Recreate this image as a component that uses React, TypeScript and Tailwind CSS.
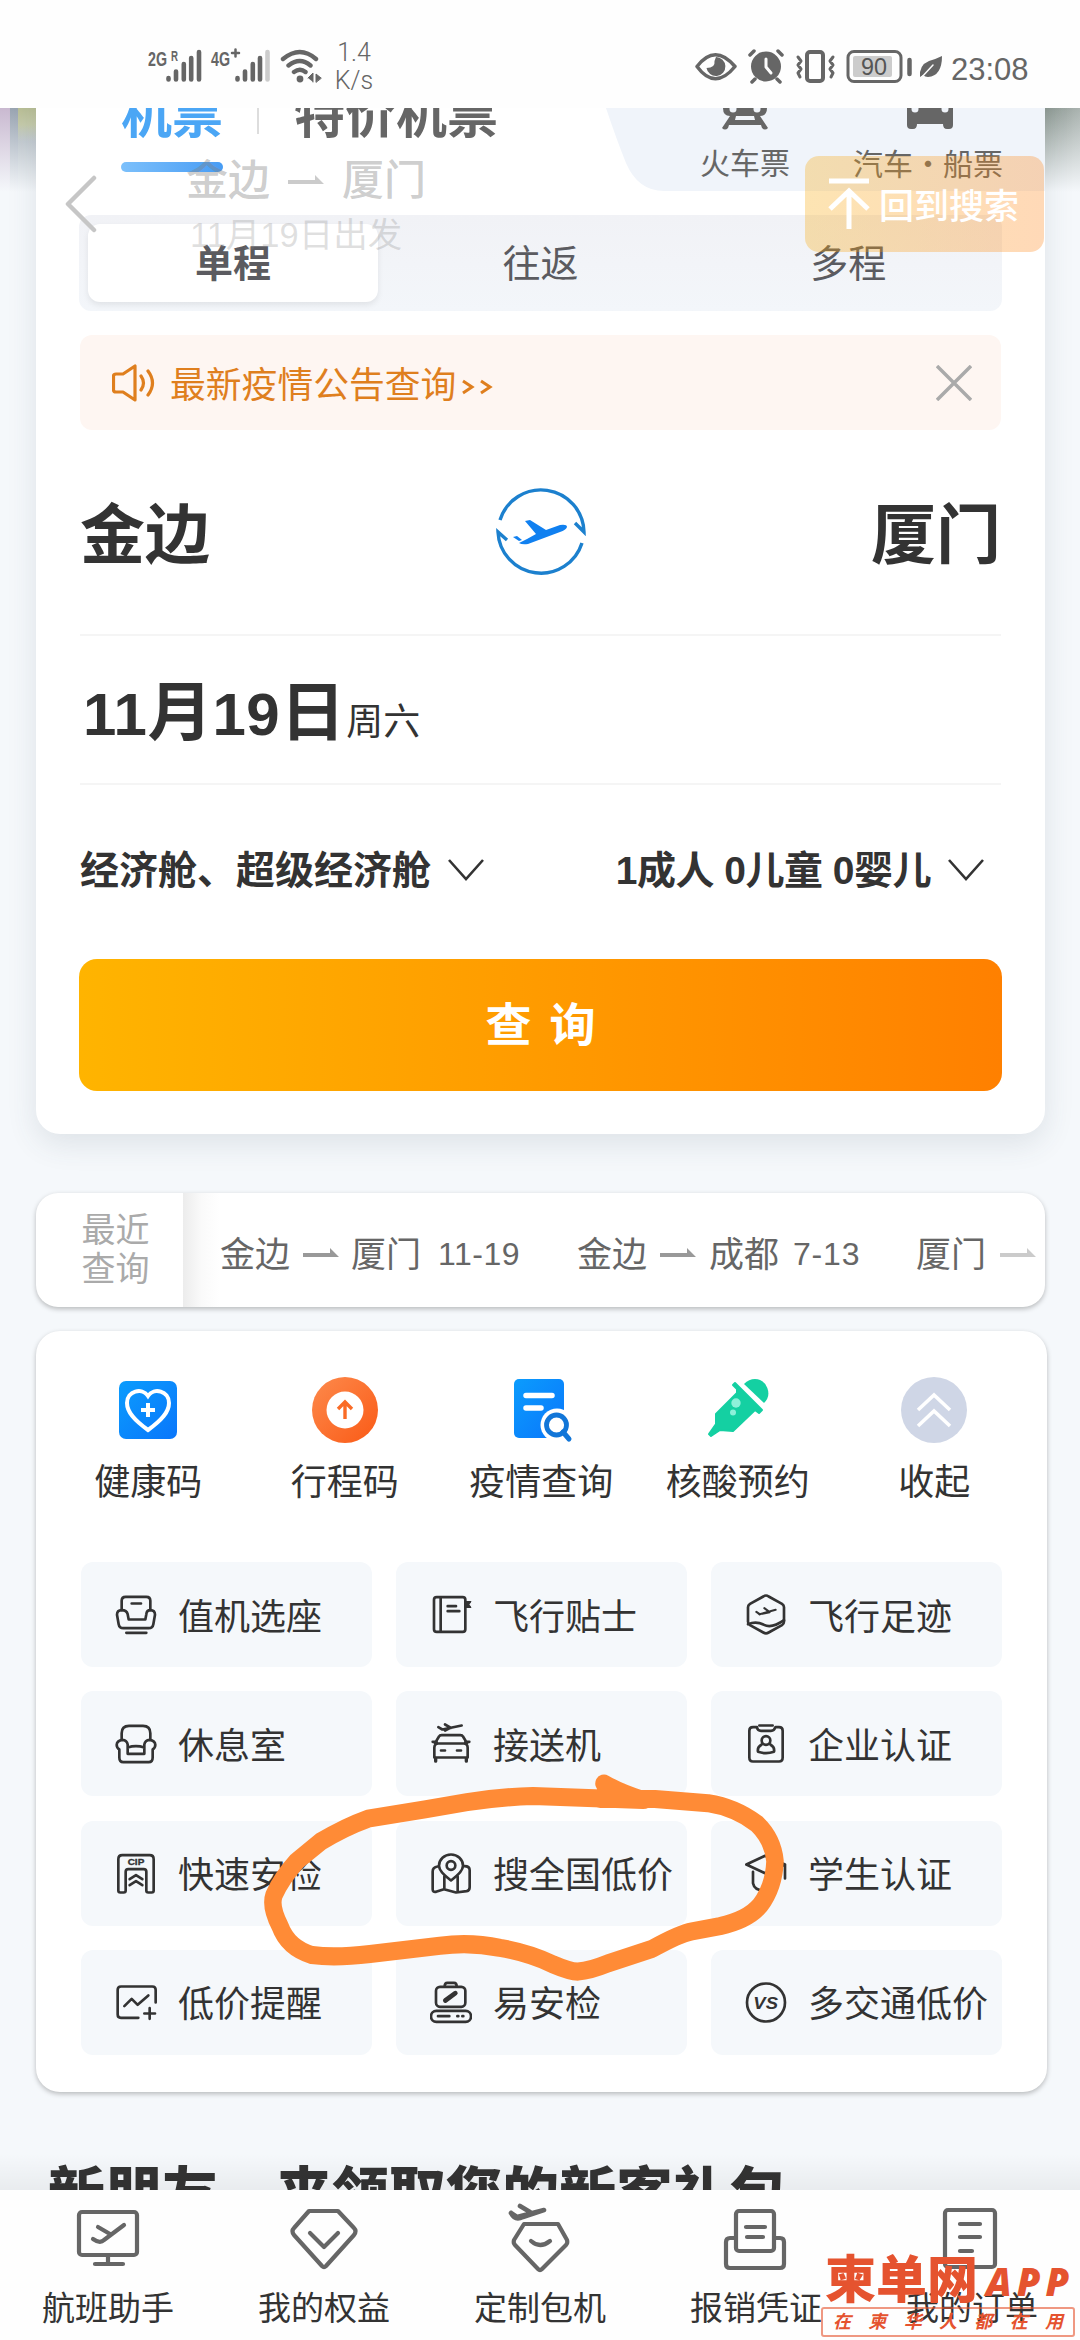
import type { ReactNode } from "react";

interface IconProps {
  children: ReactNode;
  box?: string;
  className?: string;
}

function LineIcon({ children, box = "0 0 126 126", className = "w-[42px] h-[43px]" }: IconProps) {
  return (
    <svg
      viewBox={box}
      className={`shrink-0 ${className}`}
      fill="none"
      stroke="currentColor"
      strokeWidth={8}
      strokeLinecap="round"
      strokeLinejoin="round"
    >
      {children}
    </svg>
  );
}

const servicos = [
  {
    nome: "值机选座",
    icon: (
      <LineIcon>
        <path d="M20 50V22q0-12 12-12h62q12 0 12 12v28M50 30h28M34 118h60" />
        <path d="M20 50q-14 0-14 14l5 28q2 12 14 12h76q12 0 14-12l5-28q0-14-14-14q-11 0-12 12l-3 16H41l-3-16q-3-12-18-12z" />
      </LineIcon>
    ),
  },
  {
    nome: "飞行贴士",
    icon: (
      <LineIcon box="-3 0 126 126">
        <rect x="9" y="11" width="94" height="104" rx="8" />
        <path d="M29 12v102M50 38h25M50 53h35" />
        <path d="M104 24h16l-6 9 6 9h-16z" fill="currentColor" strokeWidth={3} />
      </LineIcon>
    ),
  },
  {
    nome: "飞行足迹",
    icon: (
      <LineIcon>
        <path d="M63 6q4 0 8 3l40 22q6 4 6 10v44q0 6-6 10l-40 22q-8 5-16 0L15 95q-6-4-6-10V41q0-6 6-10L55 9q4-3 8-3z" />
        <path d="M9 92q25-10 48 2t60-14" />
        <path d="M34 55l10 7 48-13M58 44l16 12-22 5M36 56l8 7" strokeWidth={6} />
      </LineIcon>
    ),
  },
  {
    nome: "休息室",
    icon: (
      <LineIcon>
        <path d="M20 50V32q0-22 22-22h42q22 0 22 22v18" />
        <path d="M38 94V66q-2-13-16-14-16 2-17 15 0 9 8 14v24q0 14 12 14h76q12 0 12-14V81q8-5 8-14-1-13-17-15-14 1-16 14v28H38zM38 75q25-8 50 0" />
      </LineIcon>
    ),
  },
  {
    nome: "接送机",
    icon: (
      <LineIcon box="-3 0 126 126">
        <path d="M12 62L24 42q2-4 8-4h56q6 0 8 4l12 20M10 105V76q0-13 12-13h76q12 0 12 13v29zM5 58h12M103 58h12" />
        <path d="M14 108v8M106 108v8" strokeWidth={10} />
        <path d="M30 84h12M78 84h12" />
        <path d="M22 14l12 7 58-12M42 6l18 10M58 16l-16 8" />
      </LineIcon>
    ),
  },
  {
    nome: "企业认证",
    icon: (
      <LineIcon>
        <path d="M36 14H24q-11 0-11 11v80q0 12 11 12h78q11 0 11-12V25q0-11-11-11H92" />
        <path d="M43 9h40M36 16q2 9 12 9h30q10 0 12-9" />
        <circle cx="63" cy="54" r="13" />
        <path d="M50 66q-14 8-11 22q24 8 48 0q3-14-11-22" />
      </LineIcon>
    ),
  },
  {
    nome: "快速安检",
    icon: (
      <LineIcon>
        <path d="M10 20q0-12 12-12h82q12 0 12 12v94q0 6-6 6h-10q-6 0-6-6V58q0-8-8-8H40q-8 0-8 8v56q0 6-6 6H16q-6 0-6-6z" />
        <path d="M44 80l19-12 19 12M44 98l19-12 19 12" />
        <text x="38" y="38" fontSize="28" fontWeight="700" fill="currentColor" strokeWidth="1" textLength="50" lengthAdjust="spacingAndGlyphs">CIP</text>
      </LineIcon>
    ),
  },
  {
    nome: "搜全国低价",
    icon: (
      <LineIcon box="-3 0 126 126">
        <path d="M60 84Q24 58 24 40a36 34 0 0 1 72 0Q96 58 60 84z" />
        <circle cx="60" cy="39" r="13" />
        <path d="M20 42q-15 2-15 15v53q0 10 10 8l24-8 36 10 32-4q9-2 9-12V53q0-12-16-12M40 72v38M80 72v46" />
      </LineIcon>
    ),
  },
  {
    nome: "学生认证",
    icon: (
      <LineIcon>
        <path d="M4 36L60 10l60 26-60 26zM24 58v34q4 22 36 22t36-22V58M120 36v42" />
      </LineIcon>
    ),
  },
  {
    nome: "低价提醒",
    icon: (
      <LineIcon>
        <path d="M70 109H18q-10 0-10-10V25q0-10 10-10h94q10 0 10 10v38M28 74l22-22 18 18 32-28M104 80v32M88 96h32" />
      </LineIcon>
    ),
  },
  {
    nome: "易安检",
    icon: (
      <LineIcon>
        <rect x="18" y="16" width="88" height="60" rx="12" />
        <path d="M44 15q0-11 8-11h20q8 0 8 11" />
        <rect x="3" y="88" width="120" height="33" rx="16" />
        <path d="M24 104h34M82 104h3M97 104h3" />
        <path d="M46 57l30-22" strokeWidth={14} />
      </LineIcon>
    ),
  },
  {
    nome: "多交通低价",
    icon: (
      <LineIcon>
        <circle cx="63" cy="63" r="57" />
        <text x="25" y="81" fontSize="50" fontWeight="700" fontStyle="italic" fill="currentColor" stroke="none" textLength="74" lengthAdjust="spacingAndGlyphs">VS</text>
      </LineIcon>
    ),
  },
];

const atalhos = [
  {
    nome: "健康码",
    icon: (
      <svg viewBox="0 0 68 68" className="w-[68px] h-[68px]" fill="none">
        <rect x="5" y="5" width="58" height="58" rx="7" fill="url(#azul)" />
        <path d="M34 54C20 44 13 36 13 27c0-12 15-16 21-7 6-9 21-5 21 7 0 9-7 17-21 27z" stroke="#fff" strokeWidth="4" />
        <path d="M34 27v14M27 34h14" stroke="#fff" strokeWidth="4" />
      </svg>
    ),
  },
  {
    nome: "行程码",
    icon: (
      <svg viewBox="0 0 68 68" className="w-[68px] h-[68px]" fill="none">
        <circle cx="34" cy="34" r="33" fill="url(#laranja)" />
        <circle cx="34" cy="34" r="18.5" fill="#fff" />
        <path d="M34 43V26M27 33l7-7 7 7" stroke="#fa6b26" strokeWidth="3.4" />
      </svg>
    ),
  },
  {
    nome: "疫情查询",
    icon: (
      <svg viewBox="0 0 68 68" className="w-[68px] h-[68px]" fill="none">
        <rect x="7" y="3" width="50" height="59" rx="5" fill="url(#azul)" />
        <path d="M19 19.500h26M19 32h15" stroke="#fff" strokeWidth="5.500" strokeLinecap="round" />
        <circle cx="50" cy="49" r="16.500" fill="#fff" />
        <circle cx="49.500" cy="49" r="10" stroke="#1276d8" strokeWidth="4.800" />
        <path d="M56 56l6 7" stroke="#1276d8" strokeWidth="5" strokeLinecap="round" />
      </svg>
    ),
  },
  {
    nome: "核酸预约",
    icon: (
      <svg viewBox="0 0 68 68" className="w-[68px] h-[68px]" fill="#14d0a2" strokeLinejoin="round">
        <path d="M40 8q5-5 11-5a14 14 0 0 1 9 24z" />
        <path d="M31 7l27 27-3 3-4-3-22 21-13-1-9 6-2-2 7-10V38l21-21V13l-4-4z" stroke="#14d0a2" strokeWidth="2" />
        <circle cx="32" cy="27" r="4.700" fill="#8df0d9" />
        <circle cx="29" cy="36.500" r="3" fill="#8df0d9" />
      </svg>
    ),
  },
  {
    nome: "收起",
    icon: (
      <svg viewBox="0 0 68 68" className="w-[68px] h-[68px]" fill="none">
        <circle cx="34" cy="34" r="33" fill="#cfd6e6" />
        <path d="M18 34l16-15 16 15M18 50l16-15 16 15" stroke="#fff" strokeWidth="3.6" />
      </svg>
    ),
  },
];

const abas = [
  {
    nome: "航班助手",
    icon: (
      <svg viewBox="0 0 72 72" className="w-[72px] h-[72px]" fill="none" stroke="#666" strokeWidth="4.2" strokeLinecap="round" strokeLinejoin="round">
        <rect x="7" y="9" width="58" height="43" rx="3" />
        <path d="M36 53v8M23 61h28M26 24l12 7M52 22L32 37q-4 4-11-1" />
      </svg>
    ),
  },
  {
    nome: "我的权益",
    icon: (
      <svg viewBox="0 0 72 72" className="w-[72px] h-[72px]" fill="none" stroke="#666" strokeWidth="4.2" strokeLinecap="round" strokeLinejoin="round">
        <path d="M21 8h29L66 25q3 3 0 7L38 63q-2 2-4 0L6 32q-3-4 0-7L21 8z" />
        <path d="M22 30l14 14 14-14" />
      </svg>
    ),
  },
  {
    nome: "定制包机",
    icon: (
      <svg viewBox="0 0 72 72" className="w-[72px] h-[72px]" fill="none" stroke="#666" strokeWidth="4.2" strokeLinecap="round" strokeLinejoin="round">
        <path d="M20 21h34l9 16q1 3-1 5L38 66q-2 2-4 0L11 42q-2-2-1-5L20 21z" />
        <path d="M27 38q9 8 19 0" />
        <path d="M7 10l6 4 27-7M16 3l10 6M7 10q4 8 12 4l21-7" strokeWidth="4.6" />
      </svg>
    ),
  },
  {
    nome: "报销凭证",
    icon: (
      <svg viewBox="0 0 72 72" className="w-[72px] h-[72px]" fill="none" stroke="#666" strokeWidth="4.2" strokeLinecap="round" strokeLinejoin="round">
        <rect x="16" y="8" width="38" height="40" rx="3" />
        <path d="M16 35H10q-4 0-4 4v22q0 4 4 4h50q4 0 4-4V39q0-4-4-4h-6M26 24h19M27 34h16" />
      </svg>
    ),
  },
  {
    nome: "我的订单",
    icon: (
      <svg viewBox="0 0 72 72" className="w-[72px] h-[72px]" fill="none" stroke="#666" strokeWidth="4.2" strokeLinecap="round" strokeLinejoin="round">
        <rect x="9" y="7" width="50" height="57" rx="3" />
        <path d="M24 21h20M24 34h20M24 48h12" />
      </svg>
    ),
  },
];

function Seta({ apagada = false }: { apagada?: boolean }) {
  return (
    <svg viewBox="0 0 36 12" className={`w-9 h-3 shrink-0 ${apagada ? "opacity-50" : ""}`} fill="#999">
      <path d="M0 5h27V0l9 9H0z" />
    </svg>
  );
}

function Chevron() {
  return (
    <svg viewBox="0 0 36 24" className="w-9 h-6 shrink-0" fill="none" stroke="#333" strokeWidth="2.6">
      <path d="M1 2l17 19L35 2" />
    </svg>
  );
}

function StatusBar() {
  return (
    <header className="h-[108px] shrink-0 bg-[#fefefe] flex items-start justify-between pl-[148px] pr-[49px] text-[#666]">
      <div className="flex pt-11">
        <svg viewBox="0 0 178 50" className="w-[178px] h-[50px]" stroke="#666" strokeWidth="4.6" strokeLinecap="round" fill="none">
          <g fill="#666" stroke="none" fontWeight="700">
            <text x="0" y="22" fontSize="21" textLength="19" lengthAdjust="spacingAndGlyphs">2G</text>
            <text x="23" y="17" fontSize="15" textLength="7" lengthAdjust="spacingAndGlyphs">R</text>
            <text x="63" y="22" fontSize="21" textLength="19" lengthAdjust="spacingAndGlyphs">4G</text>
          </g>
          <path d="M84 9h7M87.500 5.500v7" strokeWidth="2.500" />
          <path d="M20.500 34v1.500M28 27.500v8M35.800 20v15.500M43.200 14v21.500M51 8v27.500" />
          <path d="M89.500 34v1.500M97 27.500v8M104.800 20v15.500M112 14v21.500" />
          <path d="M119.500 8v27.500" stroke="#ccc" />
          <path d="M135 15q17-14 33 0M140.500 21.500q11.500-9 22 0M146 28q6-4.500 11.500 0" strokeWidth="4.400" />
          <circle cx="152" cy="35" r="3.400" fill="#666" stroke="none" />
          <path d="M160 34l5-5v9M168 38v-8l5 4z" fill="#666" strokeWidth="1" />
        </svg>
        <div className="w-[56px] -mt-[5px] text-center text-[25px] leading-[28px] font-['Roboto','Liberation_Sans',sans-serif] font-light">
          1.4
          <br />
          K/s
        </div>
      </div>
      <div className="flex pt-[48px]">
        <svg viewBox="0 0 250 38" className="w-[250px] h-[38px]" fill="none" stroke="#666" strokeWidth="3.500" strokeLinecap="round" strokeLinejoin="round">
          <path d="M2 18.500Q20 -5 40 18.500Q20 43 2 18.500z" />
          <path d="M21 9a9.500 9.500 0 1 1-9.500 11q9 0 8-7z" fill="#666" stroke="none" />
          <circle cx="71" cy="18.500" r="15" fill="#666" stroke="none" />
          <path d="M71 11v8l5 6" stroke="#fdfdfd" strokeWidth="3" />
          <path d="M55 7l4-4M87 7l-4-4M60 31l-3 3M82 31l3 3" />
          <rect x="112" y="4" width="16" height="29" rx="3" strokeWidth="4" />
          <path d="M103 9l3 4-3 4 3 4-3 4 2 4M138 9l-3 4 3 4-3 4 3 4-2 4" strokeWidth="3" />
          <rect x="153" y="3.500" width="53" height="30" rx="6" strokeWidth="3" />
          <rect x="158" y="8" width="39" height="21" rx="2" fill="#ccc" stroke="none" />
          <path d="M214.500 12v14" strokeWidth="4.500" />
          <text x="166" y="27" fontSize="23" fill="#555" stroke="none" textLength="26" lengthAdjust="spacingAndGlyphs">90</text>
          <path d="M225 29q-1-12 9-16 7-2 13-5 0 20-14 21-3 0-5-2z" fill="#666" stroke="none" />
          <path d="M226 30l12-13" stroke="#fdfdfd" strokeWidth="1.500" />
        </svg>
        <span className="ml-[6px] w-20 text-[31px] leading-[44px]">23:08</span>
      </div>
    </header>
  );
}

function SearchCard() {
  return (
    <section className="relative mx-9 -mt-12 w-[1009px] h-[1074px] shrink-0 flex flex-col bg-white rounded-[24px] shadow-[0_10px_30px_rgba(60,70,90,0.12)]">
      <div className="h-[131px] flex">
        <div className="w-[570px] flex pl-[85px] pt-[30px] text-[51px] leading-[51px] font-bold">
          <div className="w-[102px] text-[#4ba6f5] whitespace-nowrap">
            机票
            <div className="mt-[21px] h-[10px] rounded-full bg-gradient-to-r from-[#7cc0fb] to-[#479cf4]" />
          </div>
          <div className="w-[2px] h-11 ml-[34px] bg-[#ddd]" />
          <span className="ml-[35px] text-[#666] whitespace-nowrap">特价机票</span>
        </div>
        <div className="relative flex-1 flex text-[#666] text-[30px]">
          <svg viewBox="0 0 439 131" className="absolute inset-0 w-[439px] h-[131px]">
            <path d="M0 0L0 48Q10 78 20 103Q32 131 58 131H439V0z" fill="#f0f4fa" />
          </svg>
          <div className="relative w-[278px] flex flex-col items-center pt-7">
            <svg viewBox="0 0 46 42" className="w-[46px] h-[42px]" fill="#666">
              <path d="M1 0h44v20q0 8-7 8H8q-7 0-7-8z" />
              <path d="M8 28h6l-1 4h20l-1-4h6l8 12q-3 3-6 0l-1-3H7l-1 3q-3 3-6 0z" />
              <circle cx="11" cy="21" r="3.500" fill="#f0f4fa" />
              <circle cx="35" cy="21" r="3.500" fill="#f0f4fa" />
            </svg>
            <span className="leading-[30px] mt-[19px]">火车票</span>
          </div>
          <div className="relative -ml-[36px] w-[160px] flex flex-col items-center pt-7 whitespace-nowrap">
            <svg viewBox="0 0 46 42" className="w-[46px] h-[42px] ml-1" fill="#666">
              <path d="M0 0h46v37q0 4-4 4h-2q-4 0-4-5H10q0 5-4 5H4q-4 0-4-4z" />
              <circle cx="8" cy="21" r="3.500" fill="#f0f4fa" />
              <circle cx="38" cy="21" r="3.500" fill="#f0f4fa" />
            </svg>
            <span className="leading-[30px] mt-[17px] font-['Noto_Sans_CJK_SC',sans-serif]">汽车・船票</span>
          </div>
        </div>
      </div>

      <div className="mx-[43px] mt-6 h-24 rounded-[12px] bg-gradient-to-b from-[#f1f2f6] to-[#f3f6fa] p-[9px] grid grid-cols-3 text-[38px] leading-[81px] text-center text-[#5b5b60]">
        <span className="bg-white rounded-[12px] w-[290px] h-[78px] font-bold shadow-[0_3px_6px_rgba(0,0,0,0.08)]">单程</span>
        <span>往返</span>
        <span className="pl-3">多程</span>
      </div>

      <div className="mx-11 mt-[24px] h-[95px] rounded-[12px] bg-[#fef6f2] flex items-center pl-8 pr-[29px] text-[#df7f1e] text-[35.8px]">
        <svg viewBox="0 0 43 38" className="w-[43px] h-[38px]" fill="none" stroke="currentColor" strokeWidth="3.200" strokeLinejoin="round" strokeLinecap="round">
          <path d="M1.500 12Q1.500 10 4 10H11L23 2V36L11 28H4Q1.500 28 1.500 26z" />
          <path d="M29 12q5 7 0 14M36 7q9 12 0 24" />
        </svg>
        <span className="ml-[15px] pt-[6px] leading-[36px]">最新疫情公告查询</span>
        <svg viewBox="0 0 34 20" className="w-[34px] h-5 mt-2 ml-[5px]" fill="none" stroke="currentColor" strokeWidth="3">
          <path d="M2 4l9 6-9 6M20 4l9 6-9 6" />
        </svg>
        <svg viewBox="0 0 36 36" className="w-9 h-9 ml-auto" stroke="#aaa" strokeWidth="3.500">
          <path d="M1 1l34 34M35 1L1 35" />
        </svg>
      </div>

      <div className="mx-11 h-[206px] flex items-center justify-between border-b-2 border-[#f5f5f5] text-[65px] leading-[65px] font-bold text-[#333]">
        <span className="pt-[6px]">金边</span>
        <svg viewBox="0 0 92 92" className="w-[92px] h-[92px]" fill="none" stroke="#1c80ce" strokeWidth="3.400">
          <path d="M5 34A43 43 0 0 1 89 46l-9-9" />
          <path d="M87 57A43 43 0 0 1 3 46l9 8" />
          <path d="M30 35l5-1 16 10 14-5q7-1 7 2-1 3-7 5L33 58q-6 1-9-1l8-4 9-5zM18 51l4-1 5 4-3 1z" fill="#1080f0" stroke="none" />
        </svg>
        <span className="pt-[6px]">厦门</span>
      </div>

      <div className="mx-11 h-[149px] pl-[3px] border-b-2 border-[#f5f5f5] text-[#333] leading-[154px] whitespace-nowrap">
        <span className="text-[60px] font-bold tracking-[0.5px]">11</span>
        <span className="text-[65px] font-bold">月</span>
        <span className="text-[60px] font-bold tracking-[0.5px]">19</span>
        <span className="text-[65px] font-bold">日</span>
        <span className="text-[37px] ml-[1px]">周六</span>
      </div>

      <div className="mx-11 h-[174px] pb-1 flex items-center justify-between pr-[17px] text-[39px] leading-[39px] font-bold text-[#333]">
        <span className="flex items-center gap-[17px]">经济舱、超级经济舱 <Chevron /></span>
        <span className="flex items-center gap-[17px] tracking-[-0.5px]">1成人 0儿童 0婴儿 <Chevron /></span>
      </div>

      <button className="mx-[43px] h-[132px] rounded-[18px] bg-gradient-to-r from-[#ffb400] to-[#ff8000] text-white text-[46px] font-bold tracking-[18px] pl-[18px]">
        查询
      </button>
    </section>
  );
}

export default function App() {
  return (
    <div className="relative w-[1080px] h-[2340px] overflow-hidden flex flex-col bg-[#f5f8fb] font-['Liberation_Sans','Noto_Sans_CJK_SC',sans-serif]">
      <svg className="absolute w-0 h-0">
        <defs>
          <linearGradient id="azul" x1="0" y1="0" x2="1" y2="1">
            <stop offset="0" stopColor="#0b9cfd" />
            <stop offset="1" stopColor="#0a76fb" />
          </linearGradient>
          <linearGradient id="laranja" x1="0" y1="0" x2="1" y2="1">
            <stop offset="0" stopColor="#fd8a4c" />
            <stop offset="1" stopColor="#fa5a16" />
          </linearGradient>
        </defs>
      </svg>

      <StatusBar />

      <main className="relative flex-1 min-h-0 overflow-hidden flex flex-col">
        {/* Foto de fundo nas laterais do cartão */}
        <div className="absolute left-0 top-0 w-9 h-[84px] flex">
          <div className="w-[10px] bg-[#c9b9d0]" />
          <div className="w-2 bg-[#9aa5b2]" />
          <div className="flex-1 bg-gradient-to-b from-[#b9bf96] from-20% to-[#a3adb5] to-40%" />
        </div>
        <div className="absolute right-0 top-0 w-9 h-[84px] bg-gradient-to-r from-[#8d9992] to-[#aab3b0]" />
        <div className="absolute inset-x-0 top-0 h-[84px] bg-gradient-to-b from-transparent to-[#f5f8fb]" />

        <SearchCard />

        <section className="relative mx-9 mt-[59px] w-[1009px] h-[114px] shrink-0 flex bg-white rounded-[22px] overflow-hidden shadow-[0_2px_5px_rgba(0,0,0,0.25)] text-[35px] text-[#666] whitespace-nowrap">
          <div className="w-[147px] flex flex-col items-center justify-center pl-3 text-[34px] leading-[39px] text-[#aaa]">
            <span>最近</span>
            <span>查询</span>
          </div>
          <div className="w-[37px] bg-gradient-to-r from-[#ececec] via-[#fafafa] to-white" />
          <div className="flex items-center pt-2 leading-[35px]">
            <span className="w-[70px]">金边</span>
            <span className="ml-[13px] mr-3 flex"><Seta /></span>
            <span className="w-[70px]">厦门</span>
            <span className="ml-[17px] w-[139px] text-[32px] tracking-[0.5px]">11-19</span>
            <span className="w-[70px]">金边</span>
            <span className="ml-[13px] mr-[13px] flex"><Seta /></span>
            <span className="w-[70px]">成都</span>
            <span className="ml-[14px] w-[123px] text-[32px] tracking-[0.8px]">7-13</span>
            <span className="w-[70px]">厦门</span>
            <span className="ml-[14px] flex"><Seta apagada /></span>
          </div>
        </section>

        <section className="relative mx-9 mt-6 w-[1011px] h-[761px] shrink-0 flex flex-col bg-white rounded-[24px] shadow-[0_2px_5px_rgba(0,0,0,0.25)]">
          <div className="flex pl-[14px] pt-[45px] text-[36px] leading-[36px] text-[#333]">
            {atalhos.map((item) => (
              <div key={item.nome} className="w-[196.500px] flex flex-col items-center">
                {item.icon}
                <span className="mt-[21px]">{item.nome}</span>
              </div>
            ))}
          </div>
          <div className="mt-[61px] mx-[45px] w-[921px] grid grid-cols-3 gap-x-[24px] gap-y-[24.300px]">
            {servicos.map((item) => (
              <div key={item.nome} className="h-[105px] rounded-[12px] bg-[#f5f8fb] flex items-center pl-[34px] text-[36px] leading-[36px] text-[#333] whitespace-nowrap">
                {item.icon}
                <span className="ml-[21px] pt-[6px]">{item.nome}</span>
              </div>
            ))}
          </div>
        </section>

        <h2 className="mt-[71px] ml-12 text-[56.800px] leading-[64px] shrink-0 font-black text-[#333] whitespace-nowrap">
          新朋友，来领取您的新客礼包
        </h2>

        {/* Cabeçalho fixo aparecendo por cima com transparência */}
        <div className="absolute left-0 top-[52px] flex items-start text-[#808080]/40 pl-[64px]">
          <svg viewBox="0 0 34 58" className="w-[34px] h-[58px] mt-[15px]" fill="none" stroke="#c6c6c6" strokeWidth="4.500" strokeLinecap="round" strokeLinejoin="round">
            <path d="M30 3L4 29l26 26" />
          </svg>
          <div className="ml-[88px] whitespace-nowrap">
            <div className="flex items-center gap-[18px] text-[42px] leading-[42px] font-medium">
              <span>金边</span>
              <Seta apagada />
              <span>厦门</span>
            </div>
            <div className="mt-4 ml-1 text-[34.500px] leading-[34px] text-[#808080]/25">11月19日出发</div>
          </div>
        </div>
        <button className="absolute left-[805px] top-12 w-[239px] h-24 rounded-[14px] bg-gradient-to-r from-[#f8ab10]/32 to-[#ff8010]/30 flex items-center pl-[23px] text-white text-[35px] leading-[35px] font-medium whitespace-nowrap">
          <svg viewBox="0 0 42 52" className="w-[42px] h-[52px] mr-[9px]" fill="none" stroke="#fff" strokeWidth="5">
            <path d="M1 3h40M21 51V13M2 31l19-18 19 18" />
          </svg>
          <span className="pt-1">回到搜索</span>
        </button>

        {/* Marcação à mão em volta da oferta */}
        <svg viewBox="260 1760 530 210" preserveAspectRatio="none" className="absolute left-[260px] top-[1659px] w-[530px] h-[217px]" fill="none" stroke="#ff8b36" strokeWidth="17.500" strokeLinecap="round" strokeLinejoin="round">
          <path d="M604 1776Q620 1785 643 1792Q590 1790 533 1788Q500 1789 467 1794L425 1801L368 1810Q345 1818 321 1832L297 1851Q282 1867 274 1884Q270 1895 280 1914Q288 1935 312 1942Q335 1945 370 1941L440 1933Q470 1929 500 1935Q530 1940 553 1951Q570 1958 578 1958Q590 1957 608 1950L652 1936Q680 1921 692 1919L720 1914Q748 1908 760 1894Q774 1876 775 1851Q773 1830 757 1815Q735 1799 708 1795L655 1791H600" />
        </svg>
        <div className="absolute inset-x-0 bottom-0 h-9 bg-gradient-to-b from-transparent to-black/5" />
      </main>

      <nav className="relative h-[150px] shrink-0 bg-[#fefefe] flex text-[33px] leading-[33px] text-[#333]">
        {abas.map((aba) => (
          <div key={aba.nome} className="w-[216px] flex flex-col items-center pt-[13px]">
            {aba.icon}
            <span className="mt-[17px]">{aba.nome}</span>
          </div>
        ))}
        <div className="absolute left-[821px] top-[60px] w-[254px] text-[#e5532f]">
          <div className="flex items-center whitespace-nowrap font-black">
            <span className="text-[51px] leading-[57px] ml-1 pt-[2px] -mb-[2px]">柬单网</span>
            <span className="ml-[8px] mt-[5px] text-[38px] leading-[38px] italic tracking-[5px] font-black font-['Noto_Sans',sans-serif]">APP</span>
          </div>
          <div className="h-[30px] border-2 border-[#e5532f]/60 rounded-[3px] flex items-center justify-between px-[10px] text-[18px] leading-[18px] font-bold italic">
            {[..."在柬华人都在用"].map((letra, i) => (
              <span key={i}>{letra}</span>
            ))}
          </div>
        </div>
      </nav>
    </div>
  );
}
